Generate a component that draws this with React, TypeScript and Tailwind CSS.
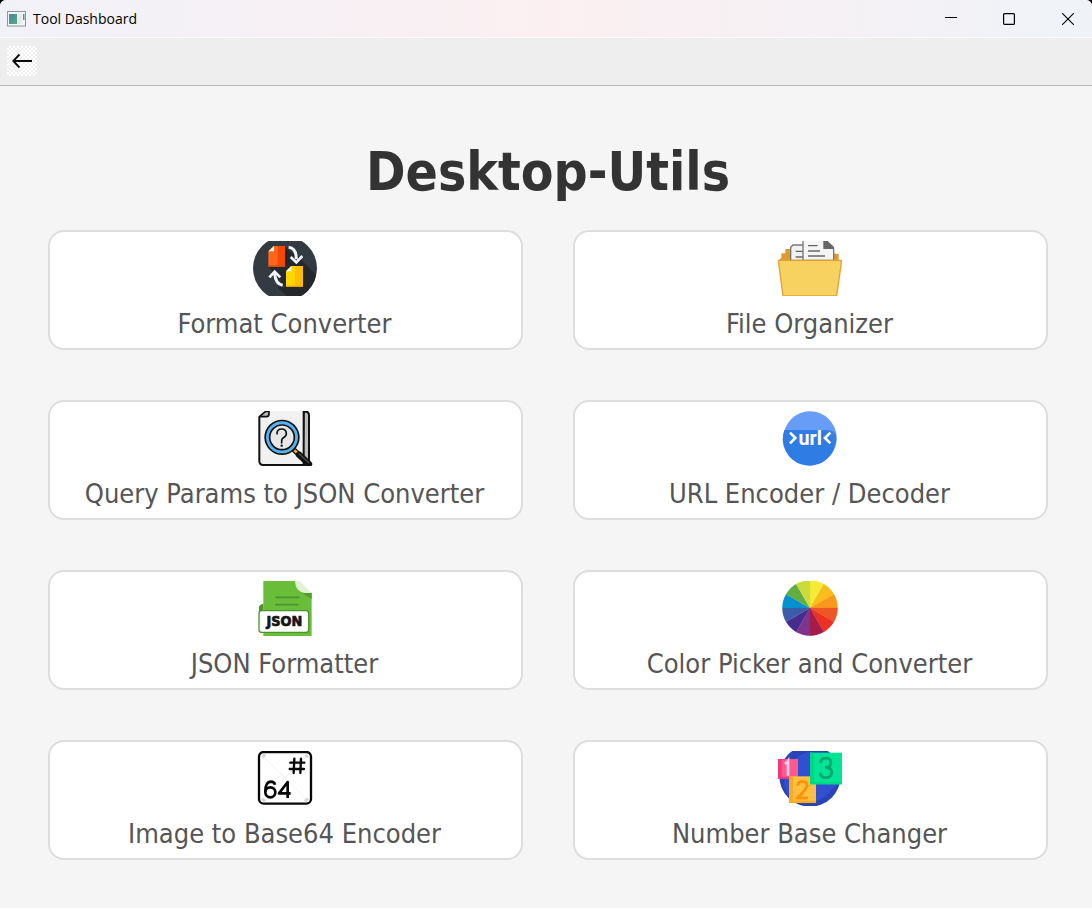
import type { ReactNode } from 'react';

function AppIcon() {
  return (
    <svg viewBox="0 0 19 16" className="h-4 w-[19px]" aria-hidden="true">
      <defs>
        <linearGradient id="app-pane" x1="0" y1="0" x2="1" y2="1">
          <stop offset="0" stopColor="#4c7fb5" />
          <stop offset="1" stopColor="#4fb06d" />
        </linearGradient>
      </defs>
      <rect x="0.5" y="0.5" width="18" height="14.5" fill="#f3f5f6" stroke="#8b969f" />
      <rect x="2" y="3" width="8" height="10" fill="url(#app-pane)" />
      <rect x="11.5" y="3" width="3" height="10" fill="#e2e7e8" />
      <rect x="16" y="3" width="1.5" height="6" fill="url(#app-pane)" />
    </svg>
  );
}

function FormatIcon() {
  return (
    <>
      <defs>
        <clipPath id="format-disc">
          <circle cx="135" cy="130" r="96" />
        </clipPath>
      </defs>
      <circle cx="135" cy="130" r="96" fill="#333a42" />
      <g clipPath="url(#format-disc)">
        <path d="M135 78 L170 90 L231 152 V213 H146 L138 200 L138 166 L125 150 L86 125 Z" fill="#24282d" />
        <path d="M134 64 L182 112 L150 130 Z M86 125 H134 L160 150 H138 V190 Z" fill="#24282d" />
        <path d="M138 186 L112 186 L140 213 H170 Z" fill="#24282d" />
      </g>
      <path d="M100 63 H134 V125 H85 V78 Z" fill="#ff661a" />
      <path d="M113 63 H135 V125 H113 Z" fill="#f54800" />
      <path d="M85 121 H135 V126 H85 Z" fill="#d94a08" />
      <path d="M102 63 V79 H86 Z" fill="#fff" />
      <path d="M153 123 H189 V186 H138 V139 Z" fill="#ffd600" />
      <path d="M165 123 H189 V186 H165 Z" fill="#ffbd00" />
      <path d="M138 182 H189 V186 H138 Z" fill="#e0a500" />
      <path d="M154 124 V139 H138 Z" fill="#fff" />
      <path d="M146 67 Q169 69 169 103" fill="none" stroke="#f1f4f8" strokeWidth="9" />
      <path d="M152 96 L169 112 L187 93" fill="none" stroke="#f1f4f8" strokeWidth="8" />
      <path d="M128 181 Q106 176 104 145" fill="none" stroke="#f1f4f8" strokeWidth="9" />
      <path d="M88 157 L104 140 L121 157" fill="none" stroke="#f1f4f8" strokeWidth="8" />
    </>
  );
}

function FolderIcon() {
  return (
    <>
      <path d="M41 106 L49 98 V85 H61 V72 H78 V85 H200 L221 87 V104 L228 110 Z" fill="#dc9c31" />
      <path d="M77 106 V67 L84 60 H116 V106 Z" fill="#f3f3f3" stroke="#777" strokeWidth="4" />
      <path d="M92 79 H114 M92 96 H114" stroke="#666" strokeWidth="4" />
      <path d="M114 106 V46 H175 L206 72 V106 Z" fill="#f5f5f5" stroke="#777" strokeWidth="4" />
      <path d="M175 48 H188 L207 66 V72 H175 Z" fill="#666" />
      <path d="M129 62 H158 M129 78 H165 M129 93 H180" stroke="#666" strokeWidth="4" />
      <path d="M40 106 H230 L215 213 H54 Z" fill="#f8d261" stroke="#e2a233" strokeWidth="4" />
    </>
  );
}

function QueryIcon() {
  return (
    <>
      <path d="M191 35 H199 Q207 36 207 46 V183 Q207 194 195 195 H188 Z" fill="#bdbdbd" stroke="#111" strokeWidth="6" />
      <path d="M88 31 H191 V195 H70 Q58 195 58 184 V50 L78 33 Z" fill="#f1f1f1" />
      <path d="M191 33 V195 H70 Q58 195 58 184 V51" fill="none" stroke="#111" strokeWidth="6" />
      <path d="M58 50 L77 34 H87 V42 Q87 50 79 50 Z" fill="#bbb" stroke="#111" strokeWidth="5" strokeLinejoin="round" />
      <path d="M161 149 L176 163" stroke="#111" strokeWidth="15" />
      <path d="M163 151 L175 162" stroke="#f5aa22" strokeWidth="8" />
      <path d="M177 164 L207 192" stroke="#111" strokeWidth="19" strokeLinecap="round" />
      <path d="M178 162 L206 188" stroke="#444" strokeWidth="5" strokeLinecap="round" />
      <circle cx="126" cy="112" r="53" fill="#111" />
      <circle cx="126" cy="112" r="43" fill="#e7e7e7" stroke="#55b3f5" strokeWidth="10" />
      <circle cx="126" cy="112" r="37" fill="#e7e7e7" stroke="#111" strokeWidth="5" />
      <path d="M111 101 V99 Q112 87 125 87 Q139 87 139 101 Q139 108 130 113 Q125 116 125 122 V129" fill="none" stroke="#111" strokeWidth="5" strokeLinecap="round" />
      <circle cx="125" cy="137" r="3.5" fill="#111" />
    </>
  );
}

function UrlIcon() {
  return (
    <>
      <circle cx="135" cy="114" r="80" fill="#679df6" />
      <path d="M58 90 H188 L211 136 A80 80 0 1 1 58 90 Z" fill="#307ce5" />
      <path d="M188 90 Q207 92 213 105 Q217 120 211 137 Z" fill="#397fdc" />
      <path d="M75 98 L91 114 L75 130 M196 98 L180 114 L196 130" fill="none" stroke="#fff" strokeWidth="8" />
      <text x="136" y="135" textAnchor="middle" fontFamily="Roboto, 'Noto Sans', sans-serif" fontWeight="700" fontSize="59" fill="#fff">
        url
      </text>
    </>
  );
}

function JsonIcon() {
  return (
    <>
      <path d="M70 33 H166 L215 70 V198 H70 Z" fill="#6abd39" />
      <path d="M186 68 H215 V87 Z" fill="#559b2e" />
      <path d="M165 33 H179 L215 69 H194 Q166 65 165 33 Z" fill="#def3d4" />
      <path d="M108 82 H176 M108 104 H173" stroke="#4c9230" strokeWidth="5" strokeLinecap="round" />
      <path d="M57 124 V112 Q58 103 70 101 V124 Z" fill="#4f922c" />
      <rect x="57" y="122" width="149" height="65" rx="8" fill="#fff" stroke="#4e9532" strokeWidth="4" />
      <text x="133" y="168" textAnchor="middle" fontFamily="'DejaVu Sans Condensed', 'DejaVu Sans', sans-serif" fontWeight="700" fontSize="43" fill="#151515" stroke="#151515" strokeWidth="2">
        JSON
      </text>
    </>
  );
}

const WHEEL = ['#f5ea36', '#f9bd19', '#f8981d', '#ee5625', '#ec3024', '#a71b48', '#7e338d', '#482c8d', '#3c5ba8', '#0790cf', '#63ad45', '#cddb39'];

function ColorIcon() {
  return (
    <>
      {WHEEL.map((color, i) => (
        <path key={color} d="M135 114 V31 A83 83 0 0 1 176.5 42.1 Z" fill={color} stroke={color} strokeWidth="0.6" transform={`rotate(${i * 30} 135 114)`} />
      ))}
    </>
  );
}

function Base64Icon() {
  return (
    <>
      <rect x="57" y="36" width="156" height="155" rx="14" fill="#fff" stroke="#080808" strokeWidth="7" />
      <path d="M66 45 L204 182 M66 182 L204 45" stroke="#f0f0f0" strokeWidth="3" />
      <path d="M67 51 L76 43 M196 44 L204 52 M66 176 L75 184 M195 184 L204 175" stroke="#d7d7d7" strokeWidth="9" />
      <path d="M163 56 L161 99 M183 56 L181 99 M151 68 H193 M149 87 H192" stroke="#080808" strokeWidth="7" strokeLinecap="round" />
      <circle cx="91" cy="157" r="15" fill="none" stroke="#080808" strokeWidth="8" />
      <path d="M105 134 Q103 125 92 125 Q76 126 76 155" fill="none" stroke="#080808" strokeWidth="8" />
      <path d="M143 174 V126 L117 160 H152" fill="none" stroke="#080808" strokeWidth="8" strokeLinejoin="round" />
    </>
  );
}

function NumberIcon() {
  return (
    <>
      <circle cx="135" cy="108" r="92" fill="#2844b5" />
      <path d="M100 48 Q142 22 190 48 Q225 80 217 132 L189 161 Q146 202 88 181 Q47 152 61 102 Z" fill="#3150cf" />
      <rect x="39" y="57" width="60" height="60" fill="#ff5990" />
      <path d="M39 57 H50 V111 H99 V117 H39 Z" fill="#ff327b" />
      <path d="M59 70 Q66 69 69 64 V107" fill="none" stroke="#ffd0e7" strokeWidth="8" />
      <rect x="72" y="109" width="81" height="80" fill="#ffbf42" />
      <path d="M72 109 H84 V182 H153 V189 H72 Z" fill="#ffa91d" />
      <path d="M99 137 Q99 124 113 124 Q127 124 126 138 Q125 147 97 174 H129" fill="none" stroke="#ff9100" strokeWidth="8" />
      <rect x="135" y="38" width="96" height="95" fill="#00e497" />
      <path d="M135 38 H147 V126 H231 V133 H135 Z" fill="#00d783" />
      <path d="M167 69 Q167 54 183 54 Q198 55 198 68 Q198 82 180 82 Q200 82 200 97 Q199 113 183 113 Q166 113 166 98" fill="none" stroke="#00a66c" strokeWidth="8" />
    </>
  );
}

const TOP_BOX = '39 48 192 165';
const ROW_BOX = '39 33 192 165';

const TOOLS: { label: string; box: string; art: ReactNode }[] = [
  { label: 'Format Converter', box: TOP_BOX, art: <FormatIcon /> },
  { label: 'File Organizer', box: TOP_BOX, art: <FolderIcon /> },
  { label: 'Query Params to JSON Converter', box: ROW_BOX, art: <QueryIcon /> },
  { label: 'URL Encoder / Decoder', box: ROW_BOX, art: <UrlIcon /> },
  { label: 'JSON Formatter', box: ROW_BOX, art: <JsonIcon /> },
  { label: 'Color Picker and Converter', box: ROW_BOX, art: <ColorIcon /> },
  { label: 'Image to Base64 Encoder', box: ROW_BOX, art: <Base64Icon /> },
  { label: 'Number Base Changer', box: ROW_BOX, art: <NumberIcon /> },
];

export default function App() {
  return (
    <div className="min-h-screen bg-black font-['DejaVu_Sans_Condensed','Noto_Sans',sans-serif]">
      <div className="flex min-h-screen flex-col overflow-hidden rounded-t-md bg-[#f5f5f5]">
        <header className="flex h-[38px] items-center justify-between border-b border-white bg-linear-to-r from-[#f1f2f8] via-[#fbeff1] to-[#eff3f8] pl-[7px]">
          <div className="flex items-center gap-[7px]">
            <AppIcon />
            <span className="font-['Open_Sans',sans-serif] text-sm leading-5 text-black">Tool Dashboard</span>
          </div>
          <div className="flex h-full">
            <button aria-label="Minimize" className="flex w-[58px] items-center justify-center">
              <svg viewBox="0 0 12 12" className="size-3" fill="none" stroke="#000">
                <path d="M0 4.5 H12" />
              </svg>
            </button>
            <button aria-label="Maximize" className="flex w-[58px] items-center justify-center">
              <svg viewBox="0 0 12 12" className="size-3" fill="none" stroke="#000" strokeWidth="1.2">
                <rect x="0.6" y="0.6" width="10.8" height="10.8" rx="1" />
              </svg>
            </button>
            <button aria-label="Close" className="flex w-[54px] items-center justify-center pl-[6px]">
              <svg viewBox="0 0 12 12" className="size-3" fill="none" stroke="#000" strokeWidth="1.1">
                <path d="M0 0 L12 12 M12 0 L0 12" />
              </svg>
            </button>
          </div>
        </header>

        <nav className="flex h-12 items-center border-b border-[#b5b5b5] bg-[#eee] px-[7px] pb-0.5">
          <button
            aria-label="Back"
            className="flex size-[30px] items-center justify-center bg-[#f2f2f2] bg-[conic-gradient(#fff_25%,#efefef_0_50%,#fff_0_75%,#efefef_0)] bg-size-[4px_4px]"
          >
            <svg viewBox="0 0 20 16" className="h-4 w-5" fill="none" stroke="#0a0a0a" strokeWidth="1.8">
              <path d="M20 8 H1.5 M7.5 1.5 L1.2 8 L7.5 14.5" />
            </svg>
          </button>
        </nav>

        <main className="flex-1 pt-[46px] pr-11 pb-12 pl-12">
          <h1 className="text-center text-[53px] leading-20 font-bold text-[#333]">Desktop-Utils</h1>
          <div className="mt-[18px] grid grid-cols-2 gap-[50px]">
            {TOOLS.map((tool) => (
              <button
                key={tool.label}
                className="flex h-[120px] flex-col items-center rounded-2xl border-2 border-[#ddd] bg-white pt-[9px] pr-0.5 text-[#555]"
              >
                <svg viewBox={tool.box} className="h-[55px] w-16 shrink-0" aria-hidden="true">
                  {tool.art}
                </svg>
                <span className="mt-2.5 text-[27px] leading-9 whitespace-nowrap">{tool.label}</span>
              </button>
            ))}
          </div>
        </main>
      </div>
    </div>
  );
}
